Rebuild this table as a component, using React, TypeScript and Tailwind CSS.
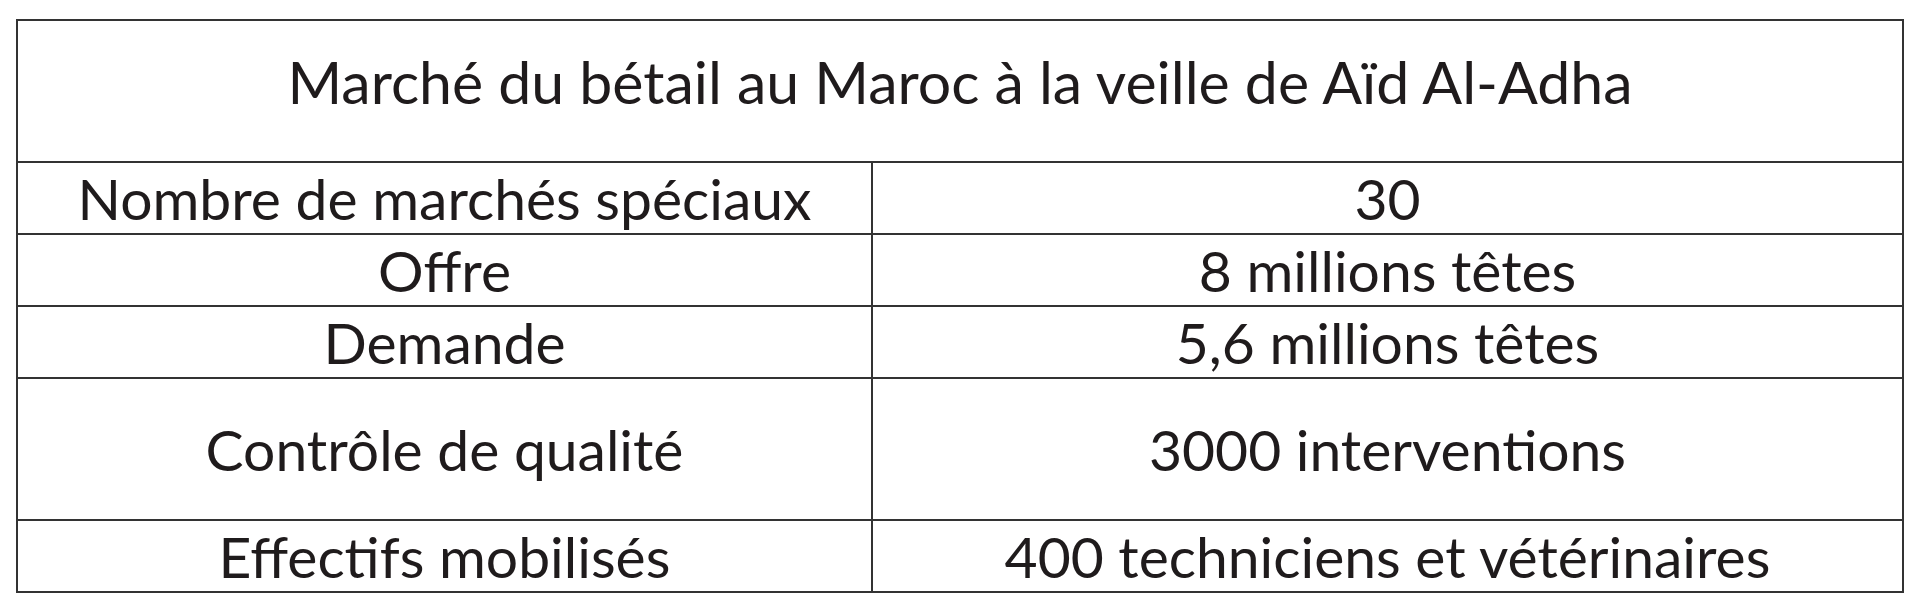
import React from "react";

const rows: { label: string; value: string; tall?: boolean }[] = [
    { label: "Nombre de marchés spéciaux", value: "30" },
    { label: "Offre", value: "8 millions têtes" },
    { label: "Demande", value: "5,6 millions têtes" },
    { label: "Contrôle de qualité", value: "3000 interventions", tall: true },
    { label: "Effectifs mobilisés", value: "400 techniciens et vétérinaires" },
];

export default function App() {
    return (
        <div className="w-[1924px] h-[610px] bg-white pt-[19px] pl-[16px] font-['Lato',sans-serif] text-[#1f1b1c]">
            <table className="w-[1888px] border-collapse border-2 border-[#333]">
                <tbody>
                    <tr className="h-[142px]">
                        <td
                            colSpan={2}
                            className="border-2 border-[#333] text-center align-middle text-[59px] leading-none pb-5"
                        >
                            Marché du bétail au Maroc à la veille de Aïd Al-Adha
                        </td>
                    </tr>
                    {rows.map((row) => (
                        <tr key={row.label} className={row.tall ? "h-[142px]" : "h-[72px]"}>
                            <td className="w-[855px] border-2 border-[#333] text-center align-middle text-[57px] leading-none">
                                {row.label}
                            </td>
                            <td className="border-2 border-[#333] text-center align-middle text-[57px] leading-none">
                                {row.value}
                            </td>
                        </tr>
                    ))}
                </tbody>
            </table>
        </div>
    );
}
